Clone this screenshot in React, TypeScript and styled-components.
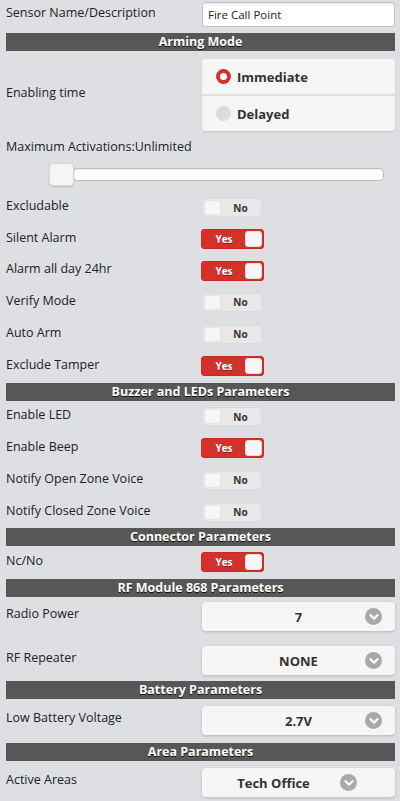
import React from "react";
import styled, { createGlobalStyle } from "styled-components";

const Global = createGlobalStyle`
  html, body { margin: 0; padding: 0; background: #dddfe3; }
  body { font-family: "Open Sans", "Noto Sans", sans-serif; color: #222; }
  * { box-sizing: border-box; }
`;

const Page = styled.div`
  width: 400px;
  height: 801px;
  overflow: hidden;
  padding: 2px 5px 0 6px;
  display: flex;
  flex-direction: column;
`;

const Row = styled.div<{ $h?: number; $mt?: number; $align?: string }>`
  display: grid;
  grid-template-columns: 196px 1fr;
  align-items: ${(p) => p.$align || "center"};
  height: ${(p) => (p.$h ? `${p.$h}px` : "auto")};
  margin-top: ${(p) => p.$mt || 0}px;
`;

const Label = styled.div<{ $pt?: number; $mb?: number }>`
  font-size: 12.5px;
  line-height: 16px;
  color: #222;
  padding-top: ${(p) => p.$pt || 0}px;
  margin-bottom: ${(p) => p.$mb || 0}px;
  white-space: nowrap;
`;

const TextInput = styled.div`
  height: 25px;
  background: #fff;
  border: 1px solid #c4c4c4;
  border-radius: 3px;
  box-shadow: inset 0 1px 2px rgba(0, 0, 0, 0.12);
  font-size: 11.5px;
  line-height: 23px;
  padding-left: 5px;
  color: #222;
`;

const Header = styled.div<{ $mt?: number }>`
  height: 18px;
  flex: none;
  margin-top: ${(p) => p.$mt || 0}px;
  background: #575757;
  color: #fff;
  font-weight: 700;
  font-size: 12.5px;
  line-height: 18px;
  text-align: center;
  text-shadow: 0 1px 0 #111;
`;

const RadioGroup = styled.div`
  background: #f6f6f6;
  border-radius: 4px;
  box-shadow: 0 1px 2px rgba(0, 0, 0, 0.1);
  display: flex;
  flex-direction: column;
`;

const RadioItem = styled.div<{ $h: number; $divider?: boolean }>`
  height: ${(p) => p.$h}px;
  display: flex;
  align-items: center;
  gap: 6px;
  padding-left: 14px;
  font-weight: 700;
  font-size: 13px;
  color: #333;
  border-top: ${(p) => (p.$divider ? "2px solid #dedede" : "none")};
`;

const RadioDot = styled.span<{ $on?: boolean }>`
  width: 15px;
  height: 15px;
  border-radius: 50%;
  background: ${(p) => (p.$on ? "#fff" : "#dcdcdc")};
  border: ${(p) => (p.$on ? "4px solid #d3322c" : "none")};
  flex: none;
`;

const SliderLabel = styled.div`
  font-size: 12.5px;
  line-height: 16px;
  margin-top: 8px;
  white-space: nowrap;
`;

const SliderWrap = styled.div`
  position: relative;
  flex: none;
  height: 23px;
  margin: 8px 0 6px 43px;
  width: 335px;
`;

const Track = styled.div`
  margin-left: 24px;
  margin-top: 5px;
  height: 13px;
  background: #fff;
  border: 1px solid #bdbdbd;
  border-radius: 4px;
  box-shadow: inset 0 1px 2px rgba(0, 0, 0, 0.08);
`;

const Handle = styled.div`
  position: absolute;
  left: 0;
  top: 0;
  width: 25px;
  height: 23px;
  background: #f5f5f5;
  border: 1px solid #d8d8d8;
  border-radius: 4px;
  box-shadow: 0 1px 2px rgba(0, 0, 0, 0.15);
`;

const Toggle = styled.div<{ $on?: boolean }>`
  display: flex;
  align-items: center;
  width: ${(p) => (p.$on ? 63 : 60)}px;
  height: ${(p) => (p.$on ? 20 : 19)}px;
  margin-left: ${(p) => (p.$on ? -1 : 0)}px;
  border-radius: 3px;
  background: ${(p) => (p.$on ? "#d3322c" : "#e8e8e8")};
  border: 1px solid ${(p) => (p.$on ? "#c62b25" : "#dcdcdc")};
  flex-direction: ${(p) => (p.$on ? "row" : "row-reverse")};
  padding: 1px;
`;

const ToggleText = styled.span<{ $on?: boolean }>`
  flex: 1;
  text-align: center;
  font-weight: 700;
  font-size: 10px;
  color: ${(p) => (p.$on ? "#fff" : "#333")};
  text-shadow: ${(p) => (p.$on ? "0 1px 0 #8a1c18" : "none")};
`;

const Knob = styled.span<{ $on?: boolean }>`
  width: 17px;
  height: ${(p) => (p.$on ? 16 : 15)}px;
  background: #f6f6f6;
  border-radius: 3px;
  border: 1px solid ${(p) => (p.$on ? "#e0e0e0" : "#e4e4e4")};
  flex: none;
`;

const Select = styled.div<{ $compact?: boolean }>`
  height: 29px;
  background: #f6f6f6;
  border-radius: 4px;
  box-shadow: 0 1px 3px rgba(0, 0, 0, 0.18);
  display: flex;
  align-items: center;
  justify-content: center;
  position: relative;
  font-weight: 700;
  font-size: 13px;
  color: #333;
  padding-right: ${(p) => (p.$compact ? 50 : 0)}px;
`;

const Chevron = styled.span<{ $right: number }>`
  position: absolute;
  right: ${(p) => p.$right}px;
  top: 6px;
  width: 17px;
  height: 17px;
  border-radius: 50%;
  background: #a9a9a9;
  display: flex;
  align-items: center;
  justify-content: center;
`;

const ChevronIcon = () => (
  <svg width="10" height="10" viewBox="0 0 10 10">
    <path d="M1.5 3.2 L5 6.6 L8.5 3.2" fill="none" stroke="#fff" strokeWidth="2.2" strokeLinecap="round" strokeLinejoin="round" />
  </svg>
);

const ToggleRow = ({ label, on, h }: { label: string; on?: boolean; h: number }) => (
  <Row $h={h}>
    <Label $mb={3}>{label}</Label>
    <div>
      <Toggle $on={on}>
        <ToggleText $on={on}>{on ? "Yes" : "No"}</ToggleText>
        <Knob $on={on} />
      </Toggle>
    </div>
  </Row>
);

const SelectRow = ({
  label,
  value,
  mt,
  compact,
}: {
  label: string;
  value: string;
  mt: number;
  compact?: boolean;
}) => (
  <Row $mt={mt} $align="start">
    <Label $pt={4}>{label}</Label>
    <Select $compact={compact}>
      {value}
      <Chevron $right={compact ? 38 : 13}>
        <ChevronIcon />
      </Chevron>
    </Select>
  </Row>
);

export default function App() {
  return (
    <>
      <Global />
      <Page>
        <Row $h={25}>
          <Label $mb={4}>Sensor Name/Description</Label>
          <TextInput>Fire Call Point</TextInput>
        </Row>
        <Header $mt={6}>Arming Mode</Header>
        <Row $mt={8}>
          <Label $mb={4}>Enabling time</Label>
          <RadioGroup>
            <RadioItem $h={35}>
              <RadioDot $on />
              Immediate
            </RadioItem>
            <RadioItem $h={37} $divider>
              <RadioDot />
              Delayed
            </RadioItem>
          </RadioGroup>
        </Row>
        <SliderLabel>Maximum Activations:Unlimited</SliderLabel>
        <SliderWrap>
          <Track />
          <Handle />
        </SliderWrap>
        <ToggleRow label="Excludable" h={31} />
        <ToggleRow label="Silent Alarm" on h={32} />
        <ToggleRow label="Alarm all day 24hr" on h={31} />
        <ToggleRow label="Verify Mode" h={32} />
        <ToggleRow label="Auto Arm" h={32} />
        <ToggleRow label="Exclude Tamper" on h={32} />
        <Header $mt={1}>Buzzer and LEDs Parameters</Header>
        <ToggleRow label="Enable LED" h={31} />
        <ToggleRow label="Enable Beep" on h={32} />
        <ToggleRow label="Notify Open Zone Voice" h={32} />
        <ToggleRow label="Notify Closed Zone Voice" h={32} />
        <Header>Connector Parameters</Header>
        <ToggleRow label="Nc/No" on h={32} />
        <Header $mt={1}>RF Module 868 Parameters</Header>
        <SelectRow label="Radio Power" value="7" mt={5} />
        <SelectRow label="RF Repeater" value="NONE" mt={15} />
        <Header $mt={6}>Battery Parameters</Header>
        <SelectRow label="Low Battery Voltage" value="2.7V" mt={7} />
        <Header $mt={8}>Area Parameters</Header>
        <SelectRow label="Active Areas" value="Tech Office" mt={7} compact />
      </Page>
    </>
  );
}
